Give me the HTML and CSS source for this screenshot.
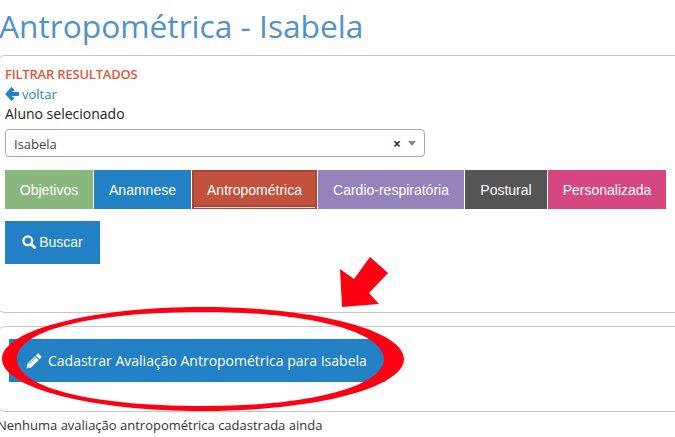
FILE: index.html
```html
<!DOCTYPE html>
<html lang="pt-BR">
<head>
<meta charset="utf-8">
<title>Antropométrica - Isabela</title>
<link rel="stylesheet" href="styles.css">
</head>
<body>
<main class="page">
  <h1 class="title">Antropométrica - Isabela</h1>
  <section class="panel filter">
    <div class="filter-title">FILTRAR RESULTADOS</div>
    <a class="back" href="#">
      <svg class="back-icon" viewBox="0 0 14 14"><path d="M7.2 0.4 L9 2.2 a0.8 0.8 0 0 1 0 1.2 L6.4 5 H13 a1 1 0 0 1 1 1 V8 a1 1 0 0 1 -1 1 H6.4 L9 10.6 a0.8 0.8 0 0 1 0 1.2 L7.2 13.6 a0.8 0.8 0 0 1 -1.2 0 L0.6 7.6 a0.8 0.8 0 0 1 0 -1.2 L6 0.4 a0.8 0.8 0 0 1 1.2 0 Z" fill="#2181c4"/></svg>
      <span>voltar</span>
    </a>
    <div class="label">Aluno selecionado</div>
    <div class="select">
      <span class="select-value">Isabela</span>
      <span class="select-clear">×</span>
      <span class="select-caret"></span>
    </div>
    <nav class="tabs">
      <a class="tab green" href="#">Objetivos</a>
      <a class="tab blue" href="#">Anamnese</a>
      <a class="tab red" href="#">Antropométrica</a>
      <a class="tab purple" href="#">Cardio-respiratória</a>
      <a class="tab dark" href="#">Postural</a>
      <a class="tab pink" href="#">Personalizada</a>
    </nav>
    <button class="search" type="button">
      <svg class="search-icon" viewBox="0 0 14 14"><circle cx="5.8" cy="5.8" r="4.4" fill="none" stroke="#fff" stroke-width="2.3"/><path d="M9 9 L12.6 12.6" stroke="#fff" stroke-width="2.8" stroke-linecap="round"/></svg>
      <span>Buscar</span>
    </button>
  </section>
  <section class="panel register">
    <button class="create" type="button">
      <svg class="pencil" viewBox="0 0 16 16">
        <path d="M11.4 0.8 a1 1 0 0 1 1.4 0 L15.2 3.2 a1 1 0 0 1 0 1.4 L13.6 6.2 L9.8 2.4 Z M9 3.2 L12.8 7 L5.2 14.6 L0.4 15.6 L1.4 10.8 Z" fill="#fff"/>
        <path d="M3.2 11.2 L9.8 4.6" stroke="#2181c4" stroke-width="0.8"/>
        <path d="M1.2 12.8 L3.2 14.8" stroke="#2181c4" stroke-width="0.8"/>
      </svg>
      <span>Cadastrar Avaliação Antropométrica para Isabela</span>
    </button>
  </section>
  <p class="empty">Nenhuma avaliação antropométrica cadastrada ainda</p>
</main>
<svg class="markup" viewBox="0 0 675 437" width="675" height="437">
  <path fill="#ff0012" fill-rule="evenodd" d="M2 359 C2 330 92 307 203 307 C314 307 404 330 404 359 C404 388 314 411 203 411 C92 411 2 388 2 359 Z M17 359 C17 385 80 406 205 406 C315 406 384 385 384 359 C384 333 315 312 205 312 C80 312 17 333 17 359 Z"/>
  <polygon fill="#ff0012" points="342,307 340,269 354,279 370,257 388,273 369,293 379,304"/>
</svg>
</body>
</html>
```
FILE: styles.css
```css
* { box-sizing: border-box; }
html, body { margin: 0; padding: 0; height: 100%; overflow: hidden; background: #fff; }
body { position: relative; font-family: "Open Sans", sans-serif; color: #222; }
.page { width: 695px; margin-left: -3px; }
.title {
  margin: 0;
  padding: 4px 0 0 2px;
  height: 55px;
  font-size: 31.7px;
  line-height: 44px;
  font-weight: 400;
  color: #4f92cc;
  white-space: nowrap;
}
.panel { border: 1px solid #c6c6c6; border-radius: 8px; background: #fff; }
.filter { height: 258px; padding: 11px 0 0 7px; }
.filter-title { font-size: 13px; line-height: 15px; font-weight: 600; color: #e2583e; letter-spacing: -0.2px; }
.back { display: flex; align-items: center; gap: 3px; height: 19px; margin-top: 2px; font-size: 13px; color: #2181c4; text-decoration: none; }
.back-icon { width: 14px; height: 14px; }
.label { font-size: 14px; line-height: 19px; margin-top: 1px; color: #222; }
.select {
  display: flex; align-items: center;
  width: 420px; height: 28px; margin-top: 6px;
  padding: 0 9px;
  border: 1px solid #aaa; border-radius: 4px;
  font-size: 13px; color: #444;
}
.select-value { flex: 1; margin-left: -1px; padding-top: 1px; }
.select-clear { font-size: 14px; font-weight: 700; color: #333; margin-right: 7px; }
.select-caret { width: 0; height: 0; margin-right: -1px; border-left: 4px solid transparent; border-right: 4px solid transparent; border-top: 5px solid #888; }
.tabs { display: flex; gap: 1px; margin-top: 13px; }
.tab {
  display: flex; align-items: center; justify-content: center;
  height: 39px;
  font-family: "Liberation Sans", sans-serif;
  font-size: 14px; color: #fff; text-decoration: none;
}
.green { width: 88px; background: #89b87f; }
.blue { width: 97px; background: #2181c4; }
.red { width: 125px; background: #c2513e; border: 2px solid #ad4534; box-shadow: inset 0 -2px 0 #ad4534; position: relative; }
.red::after { content: ""; position: absolute; left: 0; right: 0; bottom: -1px; height: 1px; background: #f2d8d2; }
.purple { width: 146px; background: #9583bb; }
.dark { width: 82px; background: #555; }
.pink { width: 118px; background: #d7477f; }
.search {
  display: flex; align-items: center; justify-content: center; gap: 3px;
  width: 95px; height: 43px; margin-top: 12px; padding: 0 0 2px;
  border: 0; background: #2181c4; color: #fff;
  font-family: "Liberation Sans", sans-serif; font-size: 14px;
}
.search-icon { width: 14px; height: 14px; }
.register { height: 86px; margin-top: 13px; padding: 12px 0 0 11px; }
.create {
  display: flex; align-items: center; gap: 6px;
  width: 376px; height: 43px; padding: 0 0 0 17px;
  border: 0; background: #2181c4; color: #fff;
  font-family: "Open Sans", sans-serif; font-size: 14px;
  white-space: nowrap;
}
.pencil { width: 16px; height: 16px; flex: none; }
.empty { margin: 4px 0 0; font-size: 13px; line-height: 18px; color: #333; white-space: nowrap; }
.markup { position: absolute; left: 0; top: 0; pointer-events: none; }
```
